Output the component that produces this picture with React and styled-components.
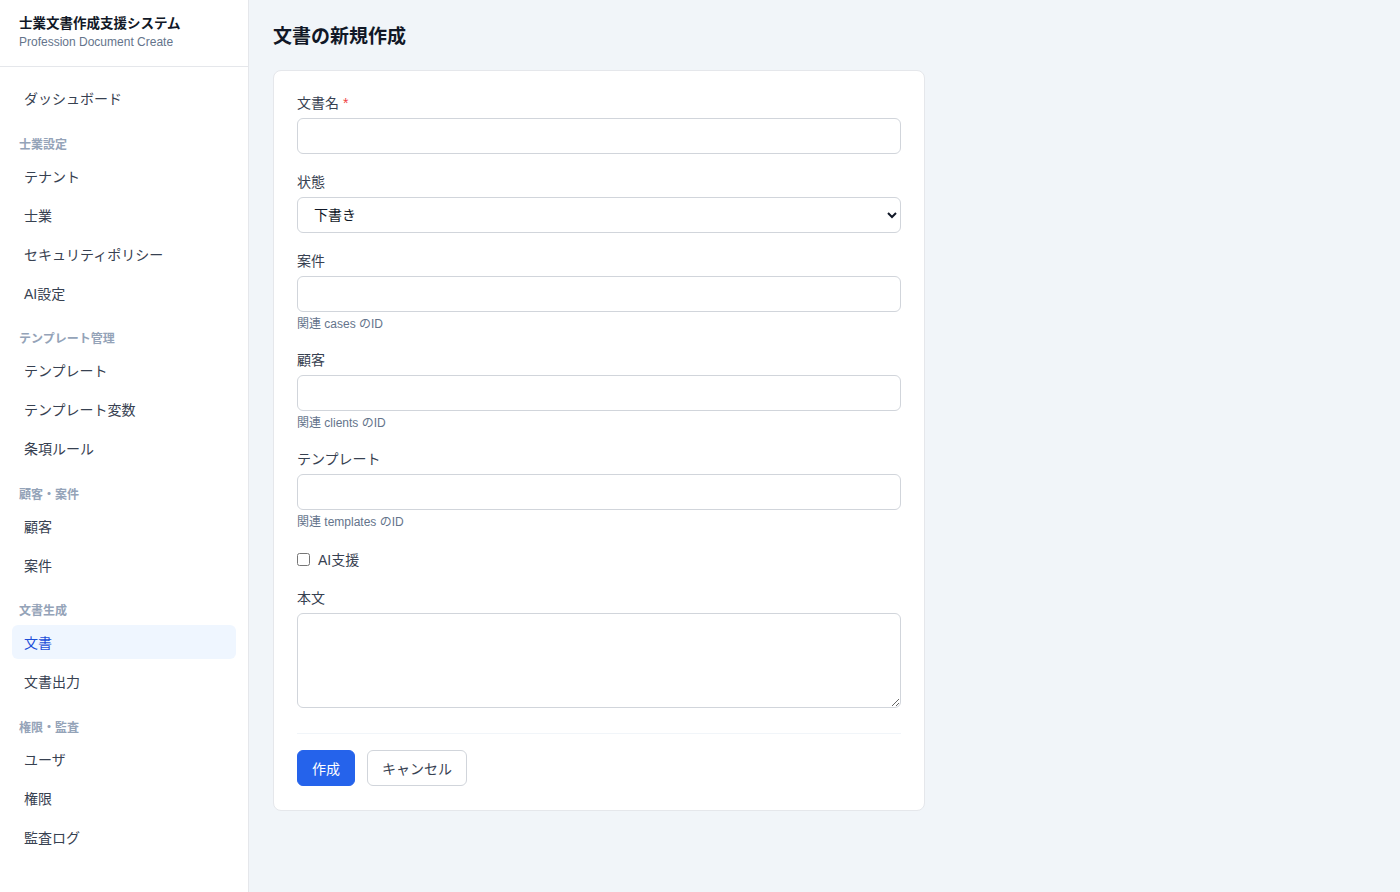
import React from 'react';
import styled, { createGlobalStyle } from 'styled-components';

const GlobalStyle = createGlobalStyle`
  html, body {
    margin: 0;
    padding: 0;
    background: #f1f5f9;
  }
  body {
    font-family: "Liberation Sans", "Noto Sans CJK JP", sans-serif;
    color: #1f2937;
  }
  * {
    box-sizing: border-box;
  }
`;

const Layout = styled.div`
  display: flex;
  min-height: 100vh;
`;

const Sidebar = styled.aside`
  width: 249px;
  flex-shrink: 0;
  background: #fff;
  border-right: 1px solid #e5e7eb;
`;

const Brand = styled.div`
  padding: 14px 19px 16px;
  border-bottom: 1px solid #e5e7eb;
  .title {
    font-size: 13.5px;
    line-height: 20px;
    font-weight: 700;
    color: #111827;
  }
  .sub {
    font-size: 12px;
    line-height: 16px;
    color: #64748b;
  }
`;

const Nav = styled.nav`
  padding: 14px 12px;
  display: flex;
  flex-direction: column;
`;

const Section = styled.div`
  font-size: 12px;
  line-height: 16px;
  font-weight: 700;
  color: #94a3b8;
  padding: 0 7px;
  margin: 16.6px 0 6px;
`;

const NavItem = styled.a`
  display: flex;
  align-items: center;
  height: 34px;
  margin-bottom: 5px;
  padding: 0 12px;
  border-radius: 6px;
  font-size: 14px;
  color: ${(p) => (p.$active ? '#1d4ed8' : '#374151')};
  background: ${(p) => (p.$active ? '#eff6ff' : 'transparent')};
  text-decoration: none;
`;

const Main = styled.main`
  flex: 1;
  padding: 24px 24px 40px;
`;

const PageTitle = styled.h1`
  margin: 0 0 21px;
  font-size: 19px;
  line-height: 25px;
  font-weight: 700;
  color: #111827;
`;

const Card = styled.form`
  width: 652px;
  background: #fff;
  border: 1px solid #e5e7eb;
  border-radius: 8px;
  padding: 22px 23px 24px;
`;

const Field = styled.div`
  margin-bottom: 18px;
`;

const Label = styled.label`
  display: block;
  font-size: 14px;
  line-height: 20px;
  color: #374151;
  margin-bottom: 5px;
  .req {
    color: #ef4444;
    margin-left: 4px;
  }
`;

const Input = styled.input`
  display: block;
  width: 100%;
  height: 36px;
  padding: 0 12px;
  border: 1px solid #d1d5db;
  border-radius: 6px;
  font-size: 14px;
  font-family: inherit;
  background: #fff;
`;

const Select = styled.select`
  display: block;
  width: 100%;
  height: 36px;
  padding: 0 8px 0 12px;
  border: 1px solid #d1d5db;
  border-radius: 6px;
  font-size: 14px;
  font-family: inherit;
  color: #111827;
  background: #fff;
`;

const TextArea = styled.textarea`
  display: block;
  width: 100%;
  height: 95px;
  padding: 8px 12px;
  border: 1px solid #d1d5db;
  border-radius: 6px;
  font-size: 14px;
  font-family: inherit;
  resize: vertical;
`;

const Help = styled.div`
  margin-top: 4px;
  font-size: 12px;
  line-height: 16px;
  color: #64748b;
`;

const CheckRow = styled.label`
  display: flex;
  align-items: center;
  gap: 8px;
  height: 22px;
  margin-bottom: 18px;
  font-size: 14px;
  color: #374151;
  input {
    margin: 0;
    width: 13px;
    height: 13px;
  }
`;

const Actions = styled.div`
  display: flex;
  gap: 12px;
  margin-top: 25px;
  padding-top: 16px;
  border-top: 1px solid #f1f5f9;
`;

const Button = styled.button`
  height: 36px;
  padding: 0 14px;
  border-radius: 6px;
  font-size: 14px;
  font-family: inherit;
  cursor: pointer;
  border: 1px solid ${(p) => (p.$primary ? '#2563eb' : '#d1d5db')};
  background: ${(p) => (p.$primary ? '#2563eb' : '#fff')};
  color: ${(p) => (p.$primary ? '#fff' : '#374151')};
`;

const navGroups = [
  { items: ['ダッシュボード'] },
  { title: '士業設定', items: ['テナント', '士業', 'セキュリティポリシー', 'AI設定'] },
  { title: 'テンプレート管理', items: ['テンプレート', 'テンプレート変数', '条項ルール'] },
  { title: '顧客・案件', items: ['顧客', '案件'] },
  { title: '文書生成', items: ['文書', '文書出力'] },
  { title: '権限・監査', items: ['ユーザ', '権限', '監査ログ'] },
];

export default function App() {
  return (
    <Layout>
      <GlobalStyle />
      <Sidebar>
        <Brand>
          <div className="title">士業文書作成支援システム</div>
          <div className="sub">Profession Document Create</div>
        </Brand>
        <Nav>
          {navGroups.map((g, i) => (
            <React.Fragment key={i}>
              {g.title && <Section>{g.title}</Section>}
              {g.items.map((it) => (
                <NavItem key={it} href="#" $active={it === '文書'}>
                  {it}
                </NavItem>
              ))}
            </React.Fragment>
          ))}
        </Nav>
      </Sidebar>
      <Main>
        <PageTitle>文書の新規作成</PageTitle>
        <Card onSubmit={(e) => e.preventDefault()}>
          <Field>
            <Label>
              文書名
              <span className="req">*</span>
            </Label>
            <Input type="text" />
          </Field>
          <Field>
            <Label>状態</Label>
            <Select defaultValue="draft">
              <option value="draft">下書き</option>
              <option value="done">完成</option>
            </Select>
          </Field>
          <Field>
            <Label>案件</Label>
            <Input type="text" />
            <Help>関連 cases のID</Help>
          </Field>
          <Field>
            <Label>顧客</Label>
            <Input type="text" />
            <Help>関連 clients のID</Help>
          </Field>
          <Field>
            <Label>テンプレート</Label>
            <Input type="text" />
            <Help>関連 templates のID</Help>
          </Field>
          <CheckRow>
            <input type="checkbox" />
            AI支援
          </CheckRow>
          <Field style={{ marginBottom: 0 }}>
            <Label>本文</Label>
            <TextArea />
          </Field>
          <Actions>
            <Button type="submit" $primary>
              作成
            </Button>
            <Button type="button">キャンセル</Button>
          </Actions>
        </Card>
      </Main>
    </Layout>
  );
}
